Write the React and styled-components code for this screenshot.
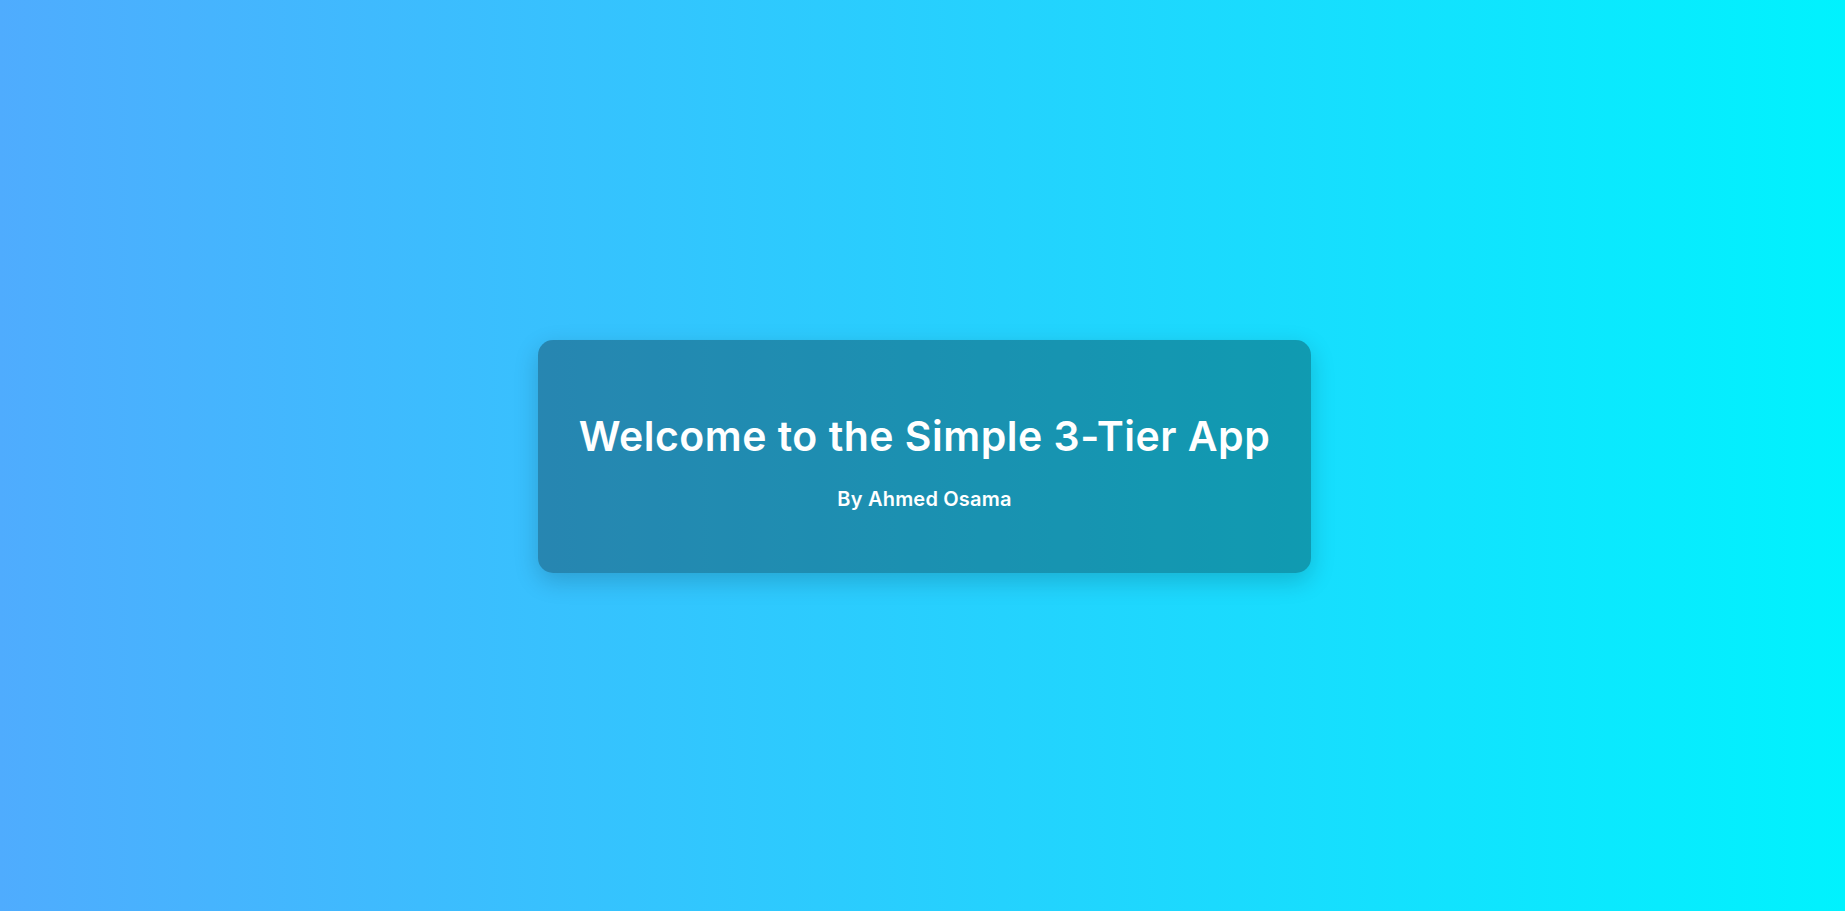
import React from 'react'
import styled, { createGlobalStyle } from 'styled-components'

const GlobalStyle = createGlobalStyle`
	html, body {
		margin: 0;
		padding: 0;
		height: 100%;
	}
	#root {
		height: 100%;
	}
`

const Page = styled.div`
	display: flex;
	align-items: center;
	justify-content: center;
	height: 100vh;
	width: 100%;
	background: linear-gradient(to right, #4facfe 0%, #00f2fe 100%);
	font-family: "Inter", "Open Sans", sans-serif;
`

const Card = styled.div`
	display: flex;
	flex-direction: column;
	align-items: center;
	box-sizing: border-box;
	width: 773px;
	padding: 40px;
	margin: 2px 0 0 4px;
	border-radius: 15px;
	background: rgba(0, 0, 0, 0.3);
	box-shadow: 0 8px 25px rgba(0, 0, 0, 0.18);
	color: #ffffff;
`

const Title = styled.h1`
	margin: 26px 0 20px;
	font-size: 41px;
	line-height: 60px;
	font-weight: 600;
	letter-spacing: 0.5px;
	white-space: nowrap;
`

const Subtitle = styled.p`
	margin: 0 0 20px;
	font-size: 20px;
	line-height: 27px;
	font-weight: 600;
	letter-spacing: 0.2px;
`

export default function App() {
	return (
		<Page>
			<GlobalStyle />
			<Card>
				<Title>Welcome to the Simple 3-Tier App</Title>
				<Subtitle>By Ahmed Osama</Subtitle>
			</Card>
		</Page>
	)
}
